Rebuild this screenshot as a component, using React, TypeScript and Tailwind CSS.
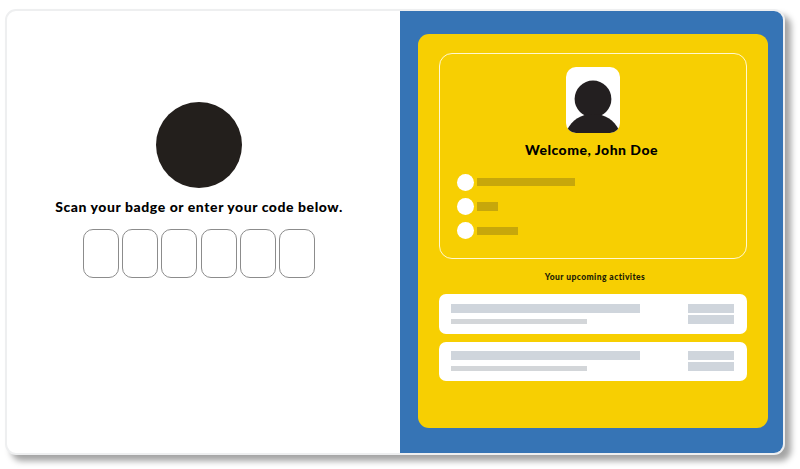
const codeSlots = [0, 1, 2, 3, 4, 5];

function ScanPanel() {
  return (
    <section className="flex w-[393px] shrink-0 flex-col items-center pr-[9px] pt-[90.5px]">
      <div className="h-[86.5px] w-[86.5px] shrink-0 rounded-full bg-[#231f1c]" />
      <h1 className="mt-[9.5px] whitespace-nowrap text-[14px] leading-[18px] font-black tracking-[0.57px] text-black">
        Scan your badge or enter your code below.
      </h1>
      <div className="mt-[13.5px] flex gap-[3.3px]">
        {codeSlots.map((slot) => (
          <div key={slot} className="h-[49px] w-[36px] rounded-[10px] border border-[#8c8c8c] bg-white" />
        ))}
      </div>
    </section>
  );
}

function Avatar() {
  return (
    <svg className="h-[66px] w-[54px]" viewBox="0 0 54 66">
      <defs>
        <clipPath id="portrait">
          <rect width="54" height="66" rx="10" />
        </clipPath>
      </defs>
      <g clipPath="url(#portrait)">
        <rect width="54" height="66" fill="#fff" />
        <circle cx="27" cy="32" r="18.4" fill="#231f20" />
        <path d="M1 66V63C6 53 15 47 27 47s21 6 26 16v3z" fill="#231f20" />
      </g>
    </svg>
  );
}

function Detail({ bar }: { bar: string }) {
  return (
    <div className="flex h-[17px] items-center gap-[3px]">
      <span className="h-[17px] w-[17px] rounded-full bg-white" />
      <span className={`bg-[#c7a70b] ${bar}`} />
    </div>
  );
}

function Activity({ compact = false }: { compact?: boolean }) {
  return (
    <div className={`flex h-[39.5px] w-[308px] justify-between rounded-[7px] bg-white pl-3 pr-[13px] ${compact ? "pt-[9px]" : "pt-[10px]"}`}>
      <div>
        <div className="h-[9px] w-[189px] bg-[#cfd5dc]" />
        <div className="mt-[6px] h-[5px] w-[136px] bg-[#d3d6d9]" />
      </div>
      <div>
        <div className="h-[9px] w-[46px] bg-[#cfd5dc]" />
        <div className="mt-[2px] h-[9px] w-[46px] bg-[#cfd5dc]" />
      </div>
    </div>
  );
}

export default function App() {
  return (
    <main className="h-[469px] w-[800px] overflow-hidden bg-white pl-[5px] pt-[9px] font-['Lato','Liberation_Sans',sans-serif]">
      <div className="flex h-[446px] w-[780px] overflow-hidden rounded-[11px] border-2 border-[#eeeff0] bg-white shadow-[6px_6px_6px_rgba(0,0,0,0.36)]">
        <ScanPanel />
        <section className="flex-1 bg-[#3674b5] pl-[18px] pt-[23px]">
          <div className="flex h-[394px] w-[350px] flex-col items-center rounded-[11px] bg-[#f7cf02] pt-[19px]">
            <div className="flex h-[206px] w-[308px] flex-col items-center rounded-[13px] border border-[#fff8d0] pt-[13px]">
              <Avatar />
              <h2 className="mt-[8px] mr-[3px] whitespace-nowrap text-[14px] leading-[18px] font-black tracking-[0.5px] text-black">
                Welcome, John Doe
              </h2>
              <div className="mt-[14.5px] flex w-full flex-col gap-[7.3px] pl-[17px]">
                <Detail bar="h-[8px] w-[98px]" />
                <Detail bar="h-[9px] w-[21px]" />
                <Detail bar="h-[8px] w-[41px]" />
              </div>
            </div>
            <p className="mt-[12px] ml-1 whitespace-nowrap text-[8.5px] leading-[12px] font-black tracking-[0.42px] text-[#211c05]">
              Your upcoming activites
            </p>
            <div className="mt-[11px] flex flex-col gap-[8px]">
              <Activity />
              <Activity compact />
            </div>
          </div>
        </section>
      </div>
    </main>
  );
}
